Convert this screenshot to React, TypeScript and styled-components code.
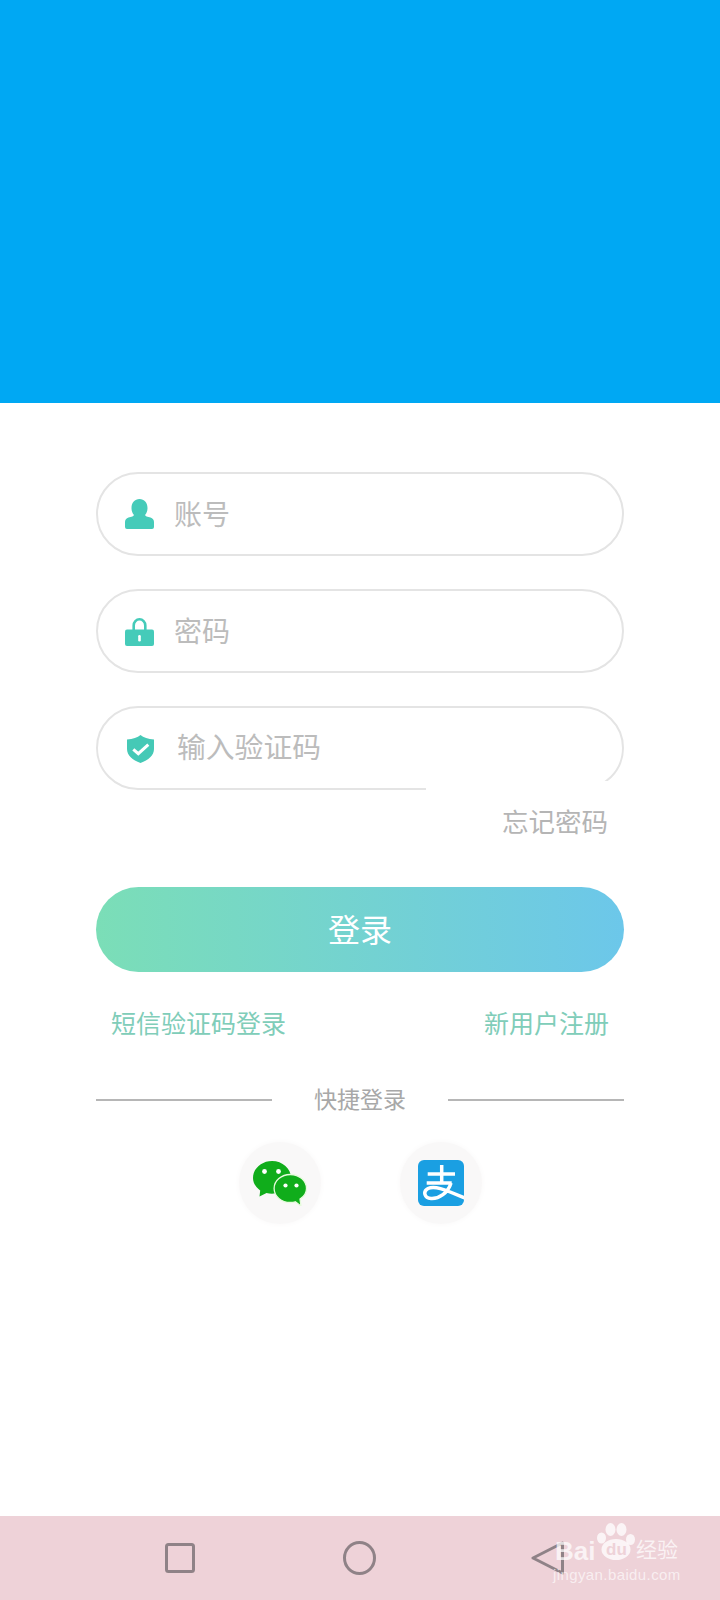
import React from 'react';
import styled, { createGlobalStyle } from 'styled-components';

const GlobalStyle = createGlobalStyle`
  html, body {
    margin: 0;
    padding: 0;
    background: #fff;
  }
  * {
    box-sizing: border-box;
  }
  body {
    font-family: "Liberation Sans", "Noto Sans CJK SC", sans-serif;
  }
`;

const Page = styled.div`
  width: 720px;
  height: 1600px;
  display: flex;
  flex-direction: column;
  overflow: hidden;
`;

const Hero = styled.div`
  height: 403px;
  background: #00a8f3;
`;

const Main = styled.main`
  flex: 1;
  display: flex;
  flex-direction: column;
  padding: 69px 96px 0 96px;
`;

const Fields = styled.div`
  display: flex;
  flex-direction: column;
  gap: 33px;
`;

const Field = styled.div`
  height: 84px;
  display: flex;
  align-items: center;
  gap: 20px;
  padding-left: 27px;
  border: 2px solid #e4e4e4;
  border-radius: 42px;
  background: #fff;
`;

const FieldText = styled.span<{ $wide?: boolean }>`
  font-size: ${({ $wide }) => ($wide ? '28.8px' : '28px')};
  line-height: 40px;
  color: #bcbcbc;
  margin-left: ${({ $wide }) => ($wide ? '3px' : '0')};
  padding-top: ${({ $wide }) => ($wide ? '0' : '3px')};
`;

const ForgotRow = styled.div`
  display: flex;
  justify-content: flex-end;
`;

const Forgot = styled.a`
  position: relative;
  width: 198px;
  margin-top: -9px;
  padding: 27px 16px 0 0;
  background: #fff;
  text-align: right;
  font-size: 26.5px;
  line-height: 30px;
  color: #b5b5b5;
`;

const LoginButton = styled.button`
  height: 85px;
  margin-top: 49px;
  border: 0;
  padding: 0 0 4px;
  border-radius: 43px;
  background: linear-gradient(90deg, #7bdeb7 0%, #6cc7ea 100%);
  font-family: inherit;
  font-size: 32px;
  color: #fff;
`;

const LinkRow = styled.div`
  display: flex;
  justify-content: space-between;
  margin-top: 37px;
  padding: 0 15px;
`;

const TextLink = styled.a`
  font-size: 25px;
  line-height: 30px;
  color: #80cdb9;
`;

const Divider = styled.div`
  display: flex;
  align-items: center;
  justify-content: space-between;
  margin-top: 48px;
`;

const DividerLine = styled.div`
  width: 176px;
  height: 2px;
  background: #b6b6b6;
`;

const DividerText = styled.span`
  font-size: 23px;
  line-height: 26px;
  color: #a8a8a8;
`;

const SocialRow = styled.div`
  display: flex;
  justify-content: center;
  gap: 79px;
  margin-top: 29px;
`;

const SocialButton = styled.div`
  width: 82px;
  height: 82px;
  display: flex;
  align-items: center;
  justify-content: center;
  border-radius: 50%;
  background: #f9f8f8;
  box-shadow: 0 0 6px #f9f8f8;
`;

const ShieldSvg = styled.svg`
  margin: 2px 0 0 2px;
`;

const LockSvg = styled.svg`
  margin-top: 1px;
`;

const NavBar = styled.nav`
  position: relative;
  height: 84px;
  display: flex;
  align-items: center;
  padding-left: 165px;
  background: #eed2d8;
`;

const NavIcon = styled.svg<{ $offset: number }>`
  display: block;
  margin-left: ${({ $offset }) => $offset}px;
`;

const Watermark = styled.div`
  position: absolute;
  left: 553px;
  top: 7px;
  width: 127px;
  height: 64px;
  color: rgba(255, 255, 255, 0.72);
`;

const Paw = styled.svg`
  position: absolute;
  left: 44px;
  top: 0;
`;

const WatermarkBrand = styled.span`
  position: absolute;
  left: 2px;
  top: 13px;
  font-size: 26px;
  line-height: 30px;
  font-weight: 700;
`;

const WatermarkDu = styled.span`
  position: absolute;
  left: 53px;
  top: 17px;
  font-size: 17px;
  line-height: 20px;
  font-weight: 700;
  color: #eed2d8;
`;

const WatermarkTitle = styled.span`
  position: absolute;
  left: 83px;
  top: 14px;
  font-size: 21px;
  line-height: 26px;
`;

const WatermarkDomain = styled.span`
  position: absolute;
  left: 0;
  top: 42px;
  font-size: 15px;
  line-height: 20px;
  letter-spacing: 0.4px;
  white-space: nowrap;
  color: rgba(255, 255, 255, 0.65);
`;

const UserIcon = () => (
  <svg width="29" height="30" viewBox="0 0 29 30">
    <path
      fill="#45cbb9"
      d="M14.500 0C9.800 0 6.500 3.600 6.500 9c0 3 1 5.500 2.500 7-.3.900-1.200 1.400-2.500 1.700L3.500 18.600C1.300 19.300 0 20.800 0 23v5q0 2 2 2h25q2 0 2-2v-5c0-2.200-1.300-3.700-3.500-4.400l-3-.9c-1.300-.3-2.200-.8-2.500-1.700 1.500-1.500 2.500-4 2.500-7 0-5.400-3.300-9-8-9z"
    />
  </svg>
);

const LockIcon = () => (
  <LockSvg width="29" height="28" viewBox="0 0 29 28">
    <path fill="none" stroke="#45cbb9" strokeWidth="2.600" d="M8.700 13V7.500a5.800 6.200 0 0 1 11.600 0V13" />
    <rect y="11.500" width="29" height="16.500" rx="2" fill="#45cbb9" />
    <rect x="13.200" y="17" width="2.600" height="6.500" rx="1.300" fill="#fff" />
  </LockSvg>
);

const ShieldIcon = () => (
  <ShieldSvg width="27" height="28" viewBox="0 0 27 28">
    <path fill="#45c9b6" d="M13.500 0c3 2.500 7.500 4 13.500 4.500V14c0 6.500-5.500 11-13.500 14C5.500 25 0 20.500 0 14V4.500C6 4 10.500 2.500 13.500 0z" />
    <path fill="none" stroke="#fff" strokeWidth="3" d="M6.300 14.300l5 4.400 10-9" />
  </ShieldSvg>
);

const WechatIcon = () => (
  <svg width="54" height="45" viewBox="0 0 54 45">
    <path
      fill="#10ad1b"
      d="M19 0C8.500 0 0 7.600 0 17c0 5 2.800 9.400 7.200 12.400L6.500 35.500l7-3.400c1.700.4 3.600.6 5.500.6 10.500 0 19-7.500 19-16.200S29.500 0 19 0z"
    />
    <circle cx="11.500" cy="10.500" r="2.400" fill="#fff" />
    <circle cx="25.500" cy="10.500" r="2.400" fill="#fff" />
    <path
      fill="#10ad1b"
      stroke="#e6fbdc"
      strokeWidth="1.300"
      d="M53.500 27.500c0-7.700-7.200-14-16.200-14s-16.200 6.300-16.200 14 7.200 14 16.200 14c1.800 0 3.500-.2 5-.7L48 45l-1-6.900c4-2.500 6.500-6.300 6.500-10.600z"
    />
    <circle cx="32.500" cy="24.500" r="2.100" fill="#fff" />
    <circle cx="43.500" cy="24.500" r="2.100" fill="#fff" />
  </svg>
);

const AlipayIcon = () => (
  <svg width="46" height="46" viewBox="0 0 46 46">
    <rect width="46" height="46" rx="6" fill="#1a9fe2" />
    <g fill="none" stroke="#fff" strokeWidth="3.500">
      <path d="M9.700 14H37" />
      <path d="M23.700 5v18" />
      <path d="M8.700 23h25" />
      <path d="M33 23c-3 10-12 16-20 15.500-6.500-.4-8.500-7-3-10 6-3 15 0 36.500 9.500" />
    </g>
  </svg>
);

const BaiduPaw = () => (
  <Paw width="38" height="37" viewBox="0 0 38 37">
    <g fill="rgba(255,255,255,0.76)">
      <ellipse cx="4.500" cy="15" rx="4.500" ry="5.500" />
      <ellipse cx="13.500" cy="6.500" rx="5" ry="6.500" />
      <ellipse cx="24.500" cy="6.500" rx="5" ry="6.500" />
      <ellipse cx="33.500" cy="16.500" rx="4.500" ry="5.500" />
      <ellipse cx="19" cy="26.500" rx="14.500" ry="10.500" />
    </g>
  </Paw>
);

const App: React.FC = () => {
  return (
    <Page>
      <GlobalStyle />
      <Hero />
      <Main>
        <Fields>
          <Field>
            <UserIcon />
            <FieldText>账号</FieldText>
          </Field>
          <Field>
            <LockIcon />
            <FieldText>密码</FieldText>
          </Field>
          <Field>
            <ShieldIcon />
            <FieldText $wide>输入验证码</FieldText>
          </Field>
        </Fields>
        <ForgotRow>
          <Forgot>忘记密码</Forgot>
        </ForgotRow>
        <LoginButton>登录</LoginButton>
        <LinkRow>
          <TextLink>短信验证码登录</TextLink>
          <TextLink>新用户注册</TextLink>
        </LinkRow>
        <Divider>
          <DividerLine />
          <DividerText>快捷登录</DividerText>
          <DividerLine />
        </Divider>
        <SocialRow>
          <SocialButton>
            <WechatIcon />
          </SocialButton>
          <SocialButton>
            <AlipayIcon />
          </SocialButton>
        </SocialRow>
      </Main>
      <NavBar>
        <NavIcon $offset={0} width="30" height="30" viewBox="0 0 30 30">
          <rect x="1.500" y="1.500" width="27" height="27" rx="2" fill="none" stroke="#8f8287" strokeWidth="3" />
        </NavIcon>
        <NavIcon $offset={148} width="33" height="34" viewBox="0 0 33 34">
          <ellipse cx="16.500" cy="17" rx="15" ry="15.500" fill="none" stroke="#8f8287" strokeWidth="3" />
        </NavIcon>
        <NavIcon $offset={155} width="33" height="34" viewBox="0 0 33 34">
          <path d="M31.500 2L2 17l29.500 15V2z" fill="none" stroke="#8f8287" strokeWidth="3" strokeLinejoin="round" />
        </NavIcon>
        <Watermark>
          <BaiduPaw />
          <WatermarkBrand>Bai</WatermarkBrand>
          <WatermarkDu>du</WatermarkDu>
          <WatermarkTitle>经验</WatermarkTitle>
          <WatermarkDomain>jingyan.baidu.com</WatermarkDomain>
        </Watermark>
      </NavBar>
    </Page>
  );
};

export default App;
